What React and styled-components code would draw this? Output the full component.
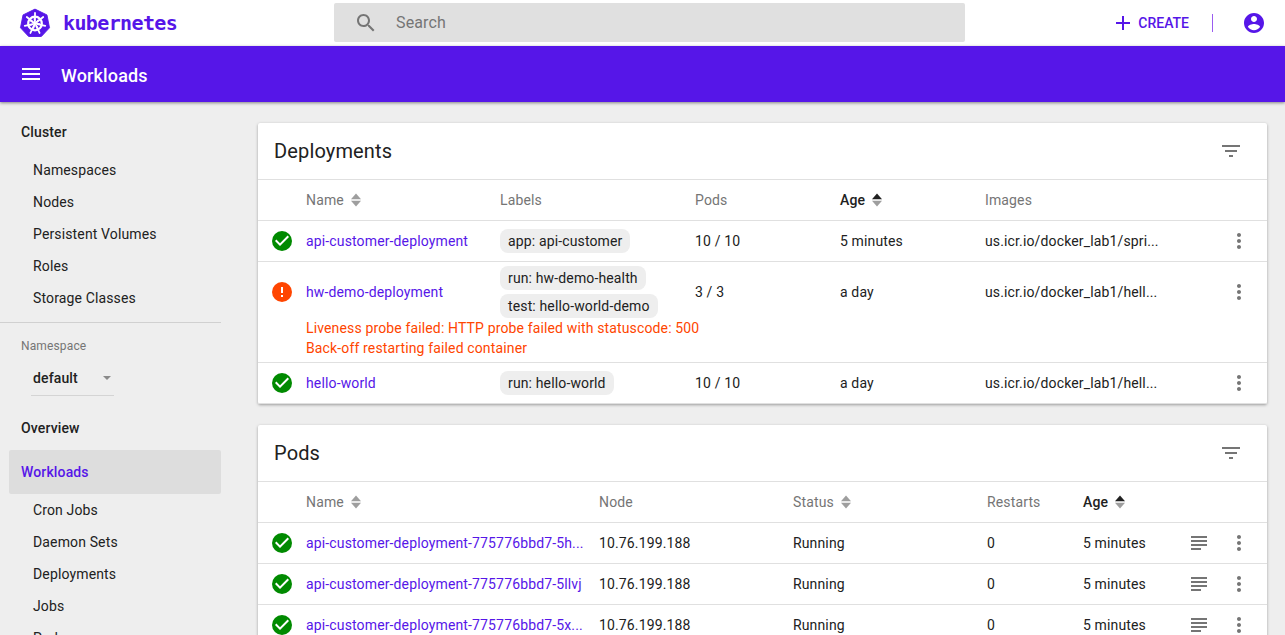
import styled, { createGlobalStyle } from "styled-components";

const PURPLE = "#5616e8";

const deployments = [
  { name: "api-customer-deployment", labels: ["app: api-customer"], pods: "10 / 10", age: "5 minutes", image: "us.icr.io/docker_lab1/spri..." },
  {
    name: "hw-demo-deployment",
    labels: ["run: hw-demo-health", "test: hello-world-demo"],
    pods: "3 / 3",
    age: "a day",
    image: "us.icr.io/docker_lab1/hell...",
    error: true,
    messages: ["Liveness probe failed: HTTP probe failed with statuscode: 500", "Back-off restarting failed container"],
  },
  { name: "hello-world", labels: ["run: hello-world"], pods: "10 / 10", age: "a day", image: "us.icr.io/docker_lab1/hell..." },
];

const pods = [
  "api-customer-deployment-775776bbd7-5h...",
  "api-customer-deployment-775776bbd7-5llvj",
  "api-customer-deployment-775776bbd7-5x...",
];

const clusterItems = ["Namespaces", "Nodes", "Persistent Volumes", "Roles", "Storage Classes"];
const workloadItems = ["Cron Jobs", "Daemon Sets", "Deployments", "Jobs", "Pods"];

const KubeLogo = () => (
  <svg width="32" height="32" viewBox="0 0 32 32">
    <path d="M16 .8 29.2 7.2 32 21.4 23 31H9L0 21.4 2.8 7.2Z" fill={PURPLE} stroke={PURPLE} strokeLinejoin="round" transform="translate(1.5 1.4) scale(.906)" />
    <g stroke="#fff" fill="none">
      <circle cx="16" cy="16.5" r="6.8" strokeWidth="2.2" />
      <circle cx="16" cy="16.5" r="1.8" fill="#fff" strokeWidth="0" />
      {[0, 51.4, 102.8, 154.3, 205.7, 257.1, 308.6].map((a) => (
        <g key={a} transform={`rotate(${a} 16 16.5)`}>
          <path d="M16 6V14" strokeWidth="1.8" strokeLinecap="round" />
          <path d="M16 16.5 19.6 12.6" strokeWidth="1.3" />
        </g>
      ))}
    </g>
  </svg>
);

const MenuIcon = () => (
  <svg width="24" height="24" viewBox="0 0 24 24" fill="#fff">
    <path d="M3 18h18v-2H3v2zm0-5h18v-2H3v2zm0-7v2h18V6H3z" />
  </svg>
);

const SearchIcon = () => (
  <svg width="24" height="24" viewBox="0 0 24 24" fill="#757575">
    <path d="M15.5 14h-.79l-.28-.27C15.41 12.59 16 11.11 16 9.5 16 5.91 13.09 3 9.5 3S3 5.91 3 9.5 5.91 16 9.5 16c1.61 0 3.09-.59 4.23-1.57l.27.28v.79l5 4.99L20.49 19l-4.99-5zm-6 0C7.01 14 5 11.99 5 9.5S7.01 5 9.5 5 14 7.01 14 9.5 11.99 14 9.5 14z" />
  </svg>
);

const PlusIcon = () => (
  <svg width="24" height="24" viewBox="0 0 24 24" fill={PURPLE}>
    <path d="M19 13h-6v6h-2v-6H5v-2h6V5h2v6h6v2z" />
  </svg>
);

const AccountIcon = () => (
  <svg width="24" height="24" viewBox="0 0 24 24" fill={PURPLE}>
    <path d="M12 2C6.48 2 2 6.48 2 12s4.48 10 10 10 10-4.48 10-10S17.52 2 12 2zm0 3c1.66 0 3 1.34 3 3s-1.34 3-3 3-3-1.34-3-3 1.34-3 3-3zm0 14.2c-2.5 0-4.71-1.28-6-3.22.03-1.99 4-3.08 6-3.08 1.99 0 5.97 1.09 6 3.08-1.29 1.94-3.5 3.22-6 3.22z" />
  </svg>
);

const FilterIcon = () => (
  <svg width="24" height="24" viewBox="0 0 24 24" fill="#757575">
    <path d="M10 18h4v-2h-4v2zM3 6v2h18V6H3zm3 7h12v-2H6v2z" />
  </svg>
);

const CheckIcon = () => (
  <svg width="24" height="24" viewBox="0 0 24 24">
    <circle cx="12" cy="12" r="10" fill="#008a00" />
    <path d="M10 17l-5-5 1.41-1.41L10 14.17l7.59-7.59L19 8l-9 9z" fill="#fff" />
  </svg>
);

const ErrorIcon = () => (
  <svg width="24" height="24" viewBox="0 0 24 24">
    <circle cx="12" cy="12" r="10" fill="#ff4500" />
    <path d="M11 15h2v2h-2zM11 7h2v6h-2z" fill="#fff" />
  </svg>
);

const MoreIcon = () => (
  <svg width="24" height="24" viewBox="0 0 24 24" fill="#757575">
    <path d="M12 8c1.1 0 2-.9 2-2s-.9-2-2-2-2 .9-2 2 .9 2 2 2zm0 2c-1.1 0-2 .9-2 2s.9 2 2 2 2-.9 2-2-.9-2-2-2zm0 6c-1.1 0-2 .9-2 2s.9 2 2 2 2-.9 2-2-.9-2-2-2z" />
  </svg>
);

const LogsIcon = () => (
  <svg width="24" height="24" viewBox="0 0 24 24" fill="#757575">
    <path d="M14 17H4v2h10v-2zm6-8H4v2h16V9zM4 15h16v-2H4v2zM4 5v2h16V5H4z" />
  </svg>
);

const SortIcon = ({ active }) => (
  <SortBox viewBox="0 0 12 16" width="12" height="16">
    <path d="M1 7.2 6 1.6l5 5.6Z" fill={active ? "#212121" : "#9e9e9e"} />
    <path d="M1 8.8l5 5.6 5-5.6Z" fill="#9e9e9e" />
  </SortBox>
);

const HeadCell = ({ children, sort, active }) => (
  <Head $active={active}>
    {children}
    {sort && <SortIcon active={active} />}
  </Head>
);

export default function App() {
  return (
    <Page>
      <GlobalStyle />
      <Topbar>
        <Brand>
          <KubeLogo />
          <BrandName>kubernetes</BrandName>
        </Brand>
        <SearchBar>
          <SearchIcon />
          <SearchText>Search</SearchText>
        </SearchBar>
        <Actions>
          <CreateButton>
            <PlusIcon />
            CREATE
          </CreateButton>
          <Divider />
          <AccountIcon />
        </Actions>
      </Topbar>
      <Toolbar>
        <MenuIcon />
        <ToolbarTitle>Workloads</ToolbarTitle>
      </Toolbar>
      <Body>
        <Sidebar>
          <SideHeading>Cluster</SideHeading>
          {clusterItems.map((item) => (
            <SideItem key={item}>{item}</SideItem>
          ))}
          <SideRule />
          <NamespaceLabel>Namespace</NamespaceLabel>
          <NamespaceSelect>
            default
            <Caret />
          </NamespaceSelect>
          <SideHeading $overview>Overview</SideHeading>
          <ActiveItem>Workloads</ActiveItem>
          {workloadItems.map((item) => (
            <SideItem key={item}>{item}</SideItem>
          ))}
        </Sidebar>
        <Content>
          <Card>
            <CardHeader>
              <CardTitle>Deployments</CardTitle>
              <FilterIcon />
            </CardHeader>
            <DeployRow $header>
              <span />
              <HeadCell sort>Name</HeadCell>
              <HeadCell>Labels</HeadCell>
              <HeadCell>Pods</HeadCell>
              <HeadCell sort active>Age</HeadCell>
              <HeadCell>Images</HeadCell>
              <span />
            </DeployRow>
            {deployments.map((d) => (
              <DeployBlock key={d.name}>
                <DeployRow>
                  <StatusCell>{d.error ? <ErrorIcon /> : <CheckIcon />}</StatusCell>
                  <ItemLink>{d.name}</ItemLink>
                  <Labels>
                    {d.labels.map((l) => (
                      <Chip key={l}>{l}</Chip>
                    ))}
                  </Labels>
                  <Cell>{d.pods}</Cell>
                  <Cell>{d.age}</Cell>
                  <Cell>{d.image}</Cell>
                  <IconCell>
                    <MoreIcon />
                  </IconCell>
                </DeployRow>
                {d.messages && (
                  <Messages>
                    {d.messages.map((m) => (
                      <div key={m}>{m}</div>
                    ))}
                  </Messages>
                )}
              </DeployBlock>
            ))}
          </Card>
          <Card>
            <CardHeader>
              <CardTitle>Pods</CardTitle>
              <FilterIcon />
            </CardHeader>
            <PodRow $header>
              <span />
              <HeadCell sort>Name</HeadCell>
              <HeadCell>Node</HeadCell>
              <HeadCell sort>Status</HeadCell>
              <HeadCell>Restarts</HeadCell>
              <HeadCell sort active>Age</HeadCell>
              <span />
              <span />
            </PodRow>
            {pods.map((p) => (
              <PodRow key={p}>
                <StatusCell>
                  <CheckIcon />
                </StatusCell>
                <ItemLink>{p}</ItemLink>
                <Cell>10.76.199.188</Cell>
                <Cell>Running</Cell>
                <Cell>0</Cell>
                <Cell>5 minutes</Cell>
                <IconCell>
                  <LogsIcon />
                </IconCell>
                <IconCell>
                  <MoreIcon />
                </IconCell>
              </PodRow>
            ))}
          </Card>
        </Content>
      </Body>
    </Page>
  );
}

const GlobalStyle = createGlobalStyle`
  html, body {
    margin: 0;
    height: 100%;
    overflow: hidden;
    background: #eeeeee;
    font-family: Roboto, "Liberation Sans", sans-serif;
    font-size: 14px;
    letter-spacing: 0.14px;
    color: #212121;
  }
`;

const Page = styled.div`
  height: 635px;
  overflow: hidden;
  display: flex;
  flex-direction: column;
`;

const Topbar = styled.header`
  height: 46px;
  flex: none;
  background: #fff;
  display: flex;
  align-items: center;
`;

const Brand = styled.div`
  width: 334px;
  flex: none;
  padding-left: 19px;
  box-sizing: border-box;
  display: flex;
  align-items: center;
  gap: 12px;
`;

const BrandName = styled.span`
  font-family: "DejaVu Sans Mono", monospace;
  font-size: 20px;
  font-weight: 700;
  letter-spacing: -0.62px;
  color: ${PURPLE};
`;

const SearchBar = styled.div`
  width: 631px;
  height: 39px;
  align-self: flex-start;
  margin-top: 3px;
  background: #e0e0e0;
  border-radius: 2px;
  display: flex;
  align-items: center;
  padding-left: 20px;
  box-sizing: border-box;
  gap: 18px;
`;

const SearchText = styled.span`
  font-size: 16px;
  color: #757575;
`;

const Actions = styled.div`
  flex: 1;
  display: flex;
  align-items: center;
  justify-content: flex-end;
  padding-right: 19px;
`;

const CreateButton = styled.div`
  display: flex;
  align-items: center;
  font-size: 14px;
  font-weight: 500;
  letter-spacing: 0;
  color: ${PURPLE};
  gap: 3px;
`;

const Divider = styled.span`
  width: 1px;
  height: 18px;
  background: #9a5cf0;
  margin: 0 29px 0 23px;
`;

const Toolbar = styled.div`
  height: 56px;
  flex: none;
  background: ${PURPLE};
  color: #fff;
  display: flex;
  align-items: center;
  padding-left: 19px;
  gap: 18px;
  box-shadow: 0 1px 3px rgba(0, 0, 0, 0.45);
  position: relative;
`;

const ToolbarTitle = styled.span`
  font-size: 18px;
  font-weight: 500;
  padding-top: 2px;
`;

const Body = styled.div`
  flex: 1;
  display: flex;
  min-height: 0;
`;

const Sidebar = styled.nav`
  width: 221px;
  flex: none;
  padding-top: 8px;
`;

const SideHeading = styled.div`
  height: 44px;
  line-height: 44px;
  padding-left: 21px;
  font-weight: 500;
  margin-top: ${(p) => (p.$overview ? "10px" : "0")};
`;

const SideItem = styled.div`
  height: 32px;
  line-height: 32px;
  padding-left: 33px;
`;

const ActiveItem = styled.div`
  height: 44px;
  line-height: 44px;
  margin-left: 9px;
  padding-left: 12px;
  background: #dddddd;
  border-radius: 2px;
  font-weight: 500;
  color: ${PURPLE};
`;

const SideRule = styled.div`
  height: 1px;
  background: #d0d0d0;
  margin-top: 8px;
`;

const NamespaceLabel = styled.div`
  font-size: 12px;
  color: #757575;
  padding: 16px 0 0 21px;
  line-height: 14px;
`;

const NamespaceSelect = styled.div`
  width: 81px;
  height: 35px;
  margin: 7px 0 0 31px;
  padding-left: 2px;
  border-bottom: 1px solid #d4d4d4;
  display: flex;
  align-items: center;
  justify-content: space-between;
  font-weight: 500;
`;

const Caret = styled.span`
  width: 0;
  height: 0;
  margin-right: 3px;
  border-left: 4px solid transparent;
  border-right: 4px solid transparent;
  border-top: 4px solid #8a8a8a;
`;

const Content = styled.main`
  flex: 1;
  padding: 21px 18px 0 37px;
  display: flex;
  flex-direction: column;
  gap: 21px;
`;

const Card = styled.section`
  background: #fff;
  border-radius: 2px;
  box-shadow: 0 1px 3px rgba(0, 0, 0, 0.35);
  flex: none;
`;

const CardHeader = styled.div`
  height: 56px;
  display: flex;
  align-items: center;
  justify-content: space-between;
  padding: 0 24px 0 16px;
  border-bottom: 1px solid #e0e0e0;
`;

const CardTitle = styled.h2`
  margin: 0;
  font-size: 20px;
  font-weight: 400;
`;

const rowStyle = `
  display: grid;
  align-items: center;
  min-height: 40px;
  padding-right: 8px;
`;

const DeployRow = styled.div`
  ${rowStyle}
  grid-template-columns: 48px 194px 195px 145px 145px 234px 40px;
  border-bottom: ${(p) => (p.$header ? "1px solid #e0e0e0" : "none")};
`;

const DeployBlock = styled.div`
  border-bottom: 1px solid #e0e0e0;
`;

const PodRow = styled.div`
  ${rowStyle}
  grid-template-columns: 48px 293px 194px 194px 96px 96px 40px 40px;
  border-bottom: 1px solid #e0e0e0;
`;

const Head = styled.div`
  display: flex;
  align-items: center;
  gap: 6px;
  color: ${(p) => (p.$active ? "#212121" : "#757575")};
  font-weight: ${(p) => (p.$active ? 500 : 400)};
`;

const SortBox = styled.svg`
  flex: none;
`;

const StatusCell = styled.div`
  display: flex;
  justify-content: center;
`;

const ItemLink = styled.div`
  color: ${PURPLE};
`;

const Cell = styled.div``;

const IconCell = styled.div`
  display: flex;
  justify-content: center;
`;

const Labels = styled.div`
  display: flex;
  flex-direction: column;
  align-items: flex-start;
  gap: 4px;
  padding: 4px 0;
`;

const Chip = styled.span`
  height: 24px;
  line-height: 24px;
  padding: 0 8px;
  border-radius: 8px;
  background: #eeeeee;
`;

const Messages = styled.div`
  padding: 0 0 4px 48px;
  margin-top: -4px;
  line-height: 20px;
  color: #ff4500;
`;
